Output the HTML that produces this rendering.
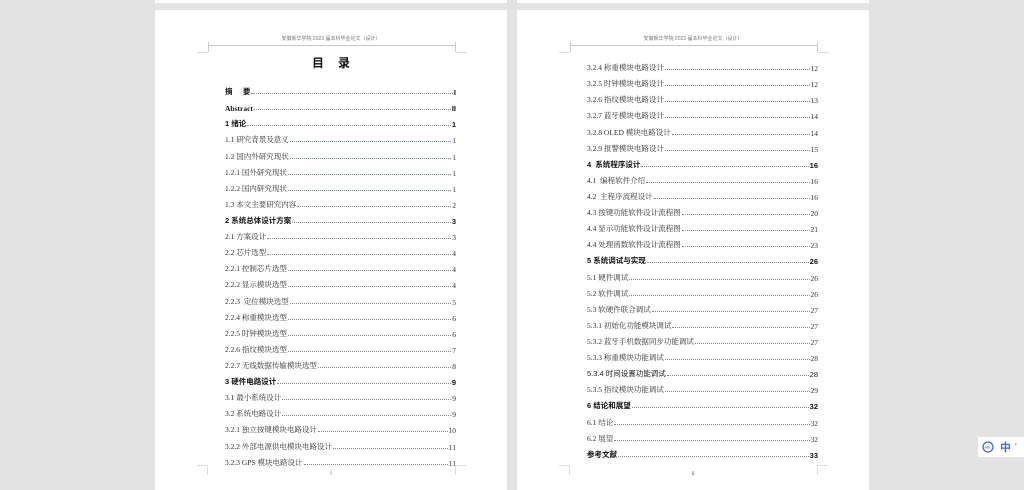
<!DOCTYPE html>
<html><head><meta charset="utf-8"><style>
*{margin:0;padding:0;box-sizing:border-box}
body{width:1024px;height:483px;background:#e3e3e3;position:relative;overflow:hidden;font-family:"Liberation Serif","Noto Serif CJK SC",serif}
.pg{position:absolute;background:#fff;top:10px;height:480px;width:352px}
.top{position:absolute;background:#fff;top:0;height:3px;width:352px}
.hd{position:absolute;top:25px;width:100%;text-align:center;font-size:5px;color:#777;font-family:"Liberation Sans","Noto Sans CJK SC",sans-serif}
.hl{position:absolute;top:35px;left:53px;width:248px;height:0;border-top:1px solid #c8c8c8}
.v1{position:absolute;top:32px;left:53px;width:1px;height:10px;background:#ccc}
.v2{position:absolute;top:32px;left:300px;width:1px;height:10px;background:#ccc}
.c1{position:absolute;top:42px;left:42px;width:11px;height:1px;background:#ddd}
.c2{position:absolute;top:42px;left:301px;width:11px;height:1px;background:#ddd}
.b1{position:absolute;top:455px;left:42px;width:11px;height:10px;border-top:1px solid #ddd;border-right:1px solid #ddd}
.b2{position:absolute;top:455px;left:300px;width:11px;height:10px;border-top:1px solid #ddd;border-left:1px solid #ddd}
.ttl{position:absolute;top:44px;width:100%;text-align:center;font-size:12px;font-weight:bold;font-family:"Liberation Sans","Noto Sans CJK SC",sans-serif;letter-spacing:14px;padding-left:14px;color:#111}
.toc{position:absolute;left:70px;width:231px}
.e{display:flex;align-items:flex-end;height:16.12px;font-size:7.5px;color:#333;white-space:nowrap}
.e .l{padding-right:1px}
.e .d{flex:1;border-bottom:1px dotted #8a8a8a;margin-bottom:3px}
.e .n{padding-left:1px}
.e.bl{color:#111;font-weight:bold;font-family:"Liberation Sans","Noto Sans CJK SC",sans-serif}
.e.u .d{border-bottom-color:#6f86b0}
.pn{position:absolute;top:462px;width:100%;text-align:center;font-size:5px;color:#666}
</style></head><body>
<div class="top" style="left:155px"></div><div class="top" style="left:517px"></div>
<div class="pg" style="left:155px">
<div class="hd">安徽新华学院 2023 届本科毕业论文（设计）</div>
<div class="hl"></div><div class="v1"></div><div class="v2"></div><div class="c1"></div><div class="c2"></div>
<div class="ttl">目录</div>
<div class="toc" style="top:71px">
<div class="e bl"><span class="l">摘&nbsp;&nbsp;&nbsp;&nbsp;&nbsp;要</span><span class="d"></span><span class="n">I</span></div>
<div class="e bl"><span class="l" style="font-family:'Liberation Serif'">Abstract</span><span class="d"></span><span class="n">II</span></div>
<div class="e bl"><span class="l">1 绪论</span><span class="d"></span><span class="n">1</span></div>
<div class="e u"><span class="l">1.1 研究背景及意义</span><span class="d"></span><span class="n">1</span></div>
<div class="e u"><span class="l">1.2 国内外研究现状</span><span class="d"></span><span class="n">1</span></div>
<div class="e u"><span class="l">1.2.1 国外研究现状</span><span class="d"></span><span class="n">1</span></div>
<div class="e u"><span class="l">1.2.2 国内研究现状</span><span class="d"></span><span class="n">1</span></div>
<div class="e"><span class="l">1.3 本文主要研究内容</span><span class="d"></span><span class="n">2</span></div>
<div class="e bl"><span class="l">2 系统总体设计方案</span><span class="d"></span><span class="n">3</span></div>
<div class="e"><span class="l">2.1 方案设计</span><span class="d"></span><span class="n">3</span></div>
<div class="e"><span class="l">2.2 芯片选型</span><span class="d"></span><span class="n">4</span></div>
<div class="e"><span class="l">2.2.1 控制芯片选型</span><span class="d"></span><span class="n">4</span></div>
<div class="e"><span class="l">2.2.2 显示模块选型</span><span class="d"></span><span class="n">4</span></div>
<div class="e"><span class="l">2.2.3&nbsp; 定位模块选型</span><span class="d"></span><span class="n">5</span></div>
<div class="e"><span class="l">2.2.4 称重模块选型</span><span class="d"></span><span class="n">6</span></div>
<div class="e"><span class="l">2.2.5 时钟模块选型</span><span class="d"></span><span class="n">6</span></div>
<div class="e"><span class="l">2.2.6 指纹模块选型</span><span class="d"></span><span class="n">7</span></div>
<div class="e"><span class="l">2.2.7 无线数据传输模块选型</span><span class="d"></span><span class="n">8</span></div>
<div class="e bl"><span class="l">3 硬件电路设计</span><span class="d"></span><span class="n">9</span></div>
<div class="e"><span class="l">3.1 最小系统设计</span><span class="d"></span><span class="n">9</span></div>
<div class="e"><span class="l">3.2 系统电路设计</span><span class="d"></span><span class="n">9</span></div>
<div class="e"><span class="l">3.2.1 独立按键模块电路设计</span><span class="d"></span><span class="n">10</span></div>
<div class="e"><span class="l">3.2.2 外部电源供电模块电路设计</span><span class="d"></span><span class="n">11</span></div>
<div class="e"><span class="l">3.2.3 GPS 模块电路设计</span><span class="d"></span><span class="n">11</span></div>
</div>
<div class="b1"></div><div class="b2"></div>
<div class="pn">I</div>
</div>
<div class="pg" style="left:517px">
<div class="hd">安徽新华学院 2023 届本科毕业论文（设计）</div>
<div class="hl"></div><div class="v1"></div><div class="v2"></div><div class="c1"></div><div class="c2"></div>
<div class="toc" style="top:47px">
<div class="e u"><span class="l">3.2.4 称重模块电路设计</span><span class="d"></span><span class="n">12</span></div>
<div class="e u"><span class="l">3.2.5 时钟模块电路设计</span><span class="d"></span><span class="n">12</span></div>
<div class="e u"><span class="l">3.2.6 指纹模块电路设计</span><span class="d"></span><span class="n">13</span></div>
<div class="e u"><span class="l">3.2.7 蓝牙模块电路设计</span><span class="d"></span><span class="n">14</span></div>
<div class="e u"><span class="l">3.2.8 OLED 模块电路设计</span><span class="d"></span><span class="n">14</span></div>
<div class="e u"><span class="l">3.2.9 报警模块电路设计</span><span class="d"></span><span class="n">15</span></div>
<div class="e bl"><span class="l">4&nbsp; 系统程序设计</span><span class="d"></span><span class="n">16</span></div>
<div class="e"><span class="l">4.1&nbsp; 编程软件介绍</span><span class="d"></span><span class="n">16</span></div>
<div class="e"><span class="l">4.2&nbsp; 主程序流程设计</span><span class="d"></span><span class="n">16</span></div>
<div class="e"><span class="l">4.3 按键功能软件设计流程图</span><span class="d"></span><span class="n">20</span></div>
<div class="e"><span class="l">4.4 显示功能软件设计流程图</span><span class="d"></span><span class="n">21</span></div>
<div class="e"><span class="l">4.4 处理函数软件设计流程图</span><span class="d"></span><span class="n">23</span></div>
<div class="e bl"><span class="l">5 系统调试与实现</span><span class="d"></span><span class="n">26</span></div>
<div class="e"><span class="l">5.1 硬件调试</span><span class="d"></span><span class="n">26</span></div>
<div class="e"><span class="l">5.2 软件调试</span><span class="d"></span><span class="n">26</span></div>
<div class="e"><span class="l">5.3 软硬件联合调试</span><span class="d"></span><span class="n">27</span></div>
<div class="e"><span class="l">5.3.1 初始化功能模块调试</span><span class="d"></span><span class="n">27</span></div>
<div class="e"><span class="l">5.3.2 蓝牙手机数据同步功能调试</span><span class="d"></span><span class="n">27</span></div>
<div class="e"><span class="l">5.3.3 称重模块功能调试</span><span class="d"></span><span class="n">28</span></div>
<div class="e bl" style="font-weight:normal;color:#222"><span class="l">5.3.4 时间设置功能调试</span><span class="d"></span><span class="n">28</span></div>
<div class="e"><span class="l">5.3.5 指纹模块功能调试</span><span class="d"></span><span class="n">29</span></div>
<div class="e bl"><span class="l">6 结论和展望</span><span class="d"></span><span class="n">32</span></div>
<div class="e"><span class="l">6.1 结论</span><span class="d"></span><span class="n">32</span></div>
<div class="e"><span class="l">6.2 展望</span><span class="d"></span><span class="n">32</span></div>
<div class="e bl"><span class="l">参考文献</span><span class="d"></span><span class="n">33</span></div>
</div>
<div class="b1"></div><div class="b2"></div>
<div class="pn">II</div>
</div>
<div style="position:absolute;left:978px;top:437px;width:46px;height:20px;background:#fff;display:flex;align-items:center;padding-left:4px">
<svg width="12" height="12" viewBox="0 0 12 12"><circle cx="6" cy="6" r="5" fill="none" stroke="#3a6fe0" stroke-width="1.3"/><text x="6" y="7.5" font-size="3.5" text-anchor="middle" fill="#3a6fe0" font-family="Liberation Sans">ABC</text></svg>
<span style="margin-left:6px;color:#3a6fe0;font-size:11px;font-weight:bold;font-family:'Noto Sans CJK SC',sans-serif">中</span>
<span style="margin-left:4px;color:#3a6fe0;font-size:10px">'</span>
</div>
</body></html>
